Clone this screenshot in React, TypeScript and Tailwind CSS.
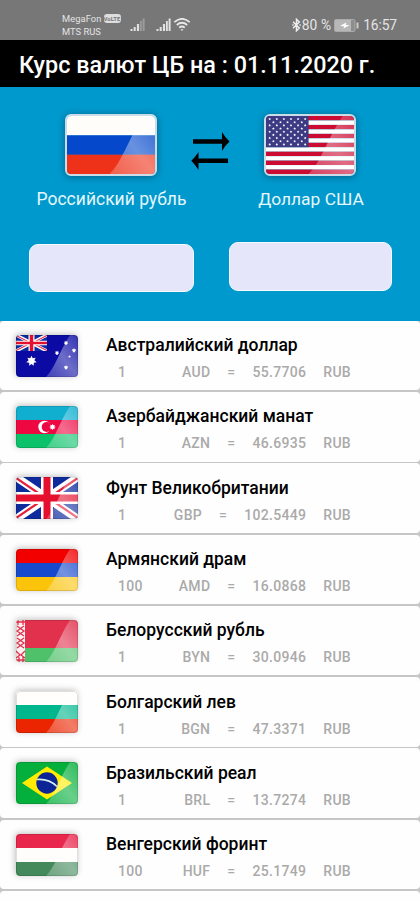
import React from "react";

type FlagCode = "RU" | "US" | "AU" | "AZ" | "GB" | "AM" | "BY" | "BG" | "BR" | "HU";

const starPoints = (cx: number, cy: number, r: number, tips: number) =>
  Array.from({ length: tips * 2 }, (_, i) => {
    const radius = i % 2 ? r * 0.55 : r;
    const a = (Math.PI * i) / tips - Math.PI / 2;
    return `${cx + radius * Math.cos(a)},${cy + radius * Math.sin(a)}`;
  }).join(" ");

function Bands({ colors }: { colors: string[] }) {
  return (
    <>
      {colors.map((c, i) => (
        <rect key={i} x="0" y={(42 / colors.length) * i} width="62" height={42 / colors.length + 0.1} fill={c} />
      ))}
    </>
  );
}

function UnionJack() {
  return (
    <>
      <rect width="62" height="42" fill="#0d2b9c" />
      <path d="M0 0 62 42M62 0 0 42" stroke="#fff" strokeWidth="8" />
      <path d="M0 1 31 22M62 1 31 22M0 41 31 20M62 41 31 20" stroke="#e5203b" strokeWidth="2.2" />
      <path d="M31 0V42M0 21H62" stroke="#fff" strokeWidth="12" />
      <path d="M31 0V42M0 21H62" stroke="#e5102d" strokeWidth="7" />
    </>
  );
}

function FlagArt({ code }: { code: FlagCode }) {
  switch (code) {
    case "RU":
      return <Bands colors={["#fffdfa", "#0548cb", "#ee3119"]} />;
    case "AM":
      return <Bands colors={["#f20000", "#1749cc", "#fbc40b"]} />;
    case "BG":
      return <Bands colors={["#fffefc", "#00b68d", "#ea2500"]} />;
    case "HU":
      return <Bands colors={["#e9264c", "#fffdfc", "#43895b"]} />;
    case "GB":
      return <UnionJack />;
    case "AZ":
      return (
        <>
          <Bands colors={["#10afcf", "#ee0842", "#0bc169"]} />
          <circle cx="28.500" cy="21" r="6.2" fill="#fff" />
          <circle cx="30.700" cy="21" r="5" fill="#ee0842" />
          <polygon points={starPoints(36.5, 21, 3.3, 8)} fill="#fff" />
        </>
      );
    case "AU":
      return (
        <>
          <rect width="62" height="42" fill="#0b0ba4" />
          <svg width="31" height="16" viewBox="0 0 62 42" preserveAspectRatio="none">
            <UnionJack />
          </svg>
          <polygon points={starPoints(15.5, 26, 5.3, 7)} fill="#fff" />
          <polygon points={starPoints(50, 8, 2.4, 7)} fill="#fff" />
          <polygon points={starPoints(41, 18, 2.4, 7)} fill="#fff" />
          <polygon points={starPoints(58, 15.5, 2.4, 7)} fill="#fff" />
          <polygon points={starPoints(53.5, 21.5, 1.4, 5)} fill="#fff" />
          <polygon points={starPoints(50, 32.5, 2.4, 7)} fill="#fff" />
        </>
      );
    case "BY":
      return (
        <>
          <rect width="62" height="28" fill="#e1314c" />
          <rect y="28" width="62" height="14" fill="#4fc16a" />
          <rect width="9" height="42" fill="#fff0f1" />
          <path
            d="M2 0V5M7 0V5M0 2H9M1 6 8 11 1 16M8 6 1 11 8 16M1 18 8 23 1 28M8 18 1 23 8 28M0 31 4 35 0 38M9 31 5 35 9 38M3 37V42M7 37V42M0 40H9"
            stroke="#e1314c"
            strokeWidth="1.3"
            fill="none"
          />
        </>
      );
    case "BR":
      return (
        <>
          <rect width="62" height="42" fill="#05af3c" />
          <path d="M31 4.5 56 21 31 37.5 6 21Z" fill="#ffec00" />
          <circle cx="31" cy="21" r="10.7" fill="#0b2496" />
          <path d="M21 17.5Q33 16.5 41 24.5" stroke="#d9eef0" strokeWidth="1.6" fill="none" />
        </>
      );
    case "US":
      return (
        <>
          {Array.from({ length: 13 }, (_, i) => (
            <rect key={i} y={(42 / 13) * i} width="62" height={42 / 13} fill={i % 2 ? "#fff" : "#cc0b32"} />
          ))}
          <rect width="30" height="22.6" fill="#3c3b83" />
          {Array.from({ length: 9 }, (_, r) =>
            Array.from({ length: r % 2 ? 5 : 6 }, (_, c) => (
              <polygon
                key={`${r}-${c}`}
                points={starPoints((r % 2 ? 5.2 : 2.6) + c * 5, 2.2 + r * 2.3, 0.95, 5)}
                fill="#fff"
              />
            )),
          )}
        </>
      );
  }
}

function Flag({ code, large = false }: { code: FlagCode; large?: boolean }) {
  const id = `gloss-${code}`;
  return (
    <div
      className={
        large
          ? "h-[62px] w-[92px] overflow-hidden rounded-[6px] border-2 border-[#c9dce8] shadow-[0_1px_7px_rgba(0,30,50,0.45)]"
          : "h-[42px] w-[62px] shrink-0 overflow-hidden rounded-[4px] shadow-[-1px_-1px_6px_rgba(0,0,0,0.25)]"
      }
    >
      <svg viewBox="0 0 62 42" preserveAspectRatio="none" className="block size-full">
        <defs>
          <linearGradient id={id} x1="0" y1="1" x2="1" y2="0">
            <stop offset="0" stopColor="#fff" stopOpacity="0.22" />
            <stop offset="0.5" stopColor="#fff" stopOpacity="0.4" />
            <stop offset="1" stopColor="#fff" stopOpacity="0.16" />
          </linearGradient>
        </defs>
        <FlagArt code={code} />
        <path d="M30 42C39 33 43 17 54 0H62V42Z" fill={`url(#${id})`} />
        {!large && <rect x="0.5" y="0.5" width="61" height="41" rx="3.5" fill="none" stroke="#000" strokeOpacity="0.12" />}
      </svg>
    </div>
  );
}

function Signal({ dim = false }: { dim?: boolean }) {
  return (
    <svg width="16" height="14" viewBox="0 0 16 14" fill="#e2e2e2">
      <rect x="0.5" y="11" width="2" height="2" />
      <rect x="3.7" y="9" width="2" height="4" />
      <rect x="6.9" y="6" width="2.2" height="7" />
      <rect x="10" y="3" width="1.8" height="10" opacity={dim ? 0.35 : 1} />
      <rect x="12.6" y="0.5" width="2" height="12.5" opacity={dim ? 0.35 : 1} />
    </svg>
  );
}

function StatusBar() {
  return (
    <div className="flex h-10 bg-[#777777] pl-[62px] pr-[23px] text-[#e4e4e4]">
      <div className="w-[68px] pt-[12px] text-[9.3px] leading-[13px]">
        <div className="flex items-center gap-[2px]">
          <span className="tracking-[0.1px]">MegaFon</span>
          <span className="flex h-[9px] w-[17px] items-center justify-center rounded-[3px] bg-[#dedede] text-[6px] font-bold leading-none text-[#777777]">
            VoLTE
          </span>
        </div>
        <div className="tracking-[0.05px]">MTS RUS</div>
      </div>
      <div className="flex pt-[18px]">
        <Signal dim />
        <div className="w-[10px]" />
        <Signal />
        <svg width="18" height="14" viewBox="0 0 18 14" className="ml-px" fill="none" stroke="#e8e8e8" strokeWidth="1.7">
          <path d="M1.3 4.2Q9-2.6 16.7 4.2M3.8 7Q9 2.5 14.2 7M6.2 9.7Q9 7.3 11.8 9.7" />
          <path d="M7.5 11.3H10.5L9 13Z" fill="#e8e8e8" stroke="none" />
        </svg>
      </div>
      <div className="ml-auto flex items-center pt-[10px]">
        <svg width="9" height="14" viewBox="0 0 9 14" fill="none" stroke="#ededed" strokeWidth="1.5">
          <path d="M1 3.8 7.3 10 4.5 12.7V1.3L7.3 4 1 10.2M.3 7H1.7M7.4 7H8.8" />
        </svg>
        <span className="ml-[1px] whitespace-pre text-[13.8px] tracking-[0.1px]">80 %</span>
        <svg width="25" height="13" viewBox="0 0 25 13" className="ml-[3px]">
          <rect x="0.5" y="0.5" width="20.5" height="12" rx="1.5" fill="#8d8d8d" stroke="#aaaaaa" />
          <rect x="1" y="1" width="16" height="11" fill="#b7b7b7" />
          <path d="M6 7 12.3 3.6 11.8 6H15.5L9.6 9.6 10 7.3Z" fill="#fff" />
          <rect x="22.5" y="3.5" width="2" height="6" fill="#c9c9c9" />
        </svg>
        <span className="ml-[4px] text-[13.8px] tracking-[-0.1px]">16:57</span>
      </div>
    </div>
  );
}

const rates: { code: FlagCode; name: string; nominal: string; iso: string; value: string }[] = [
  { code: "AU", name: "Австралийский доллар", nominal: "1", iso: "AUD", value: "55.7706" },
  { code: "AZ", name: "Азербайджанский манат", nominal: "1", iso: "AZN", value: "46.6935" },
  { code: "GB", name: "Фунт Великобритании", nominal: "1", iso: "GBP", value: "102.5449" },
  { code: "AM", name: "Армянский драм", nominal: "100", iso: "AMD", value: "16.0868" },
  { code: "BY", name: "Белорусский рубль", nominal: "1", iso: "BYN", value: "30.0946" },
  { code: "BG", name: "Болгарский лев", nominal: "1", iso: "BGN", value: "47.3371" },
  { code: "BR", name: "Бразильский реал", nominal: "1", iso: "BRL", value: "13.7274" },
  { code: "HU", name: "Венгерский форинт", nominal: "100", iso: "HUF", value: "25.1749" },
];

export default function App() {
  return (
    <div className="h-[900px] w-[420px] overflow-hidden bg-[#c6c6c6] font-[Roboto,'Noto_Sans',sans-serif]">
      <StatusBar />
      <header className="flex h-[47px] items-center bg-black pl-[19px] pt-[2px]">
        <h1 className="whitespace-nowrap text-[23.4px] font-medium leading-[30px] text-white">
          Курс валют ЦБ на : 01.11.2020 г.
        </h1>
      </header>
      <section className="h-[233.7px] bg-[#0099cd]">
        <div className="flex pt-[27px]">
          <div className="flex w-[178px] flex-col items-center pl-[44px]">
            <Flag code="RU" large />
            <div className="mt-[11px] whitespace-nowrap pl-px text-[17.5px] leading-6 text-[#e6f7fc]">Российский рубль</div>
          </div>
          <svg width="40" height="40" viewBox="0 0 40 40" className="ml-[12px] mt-[17px]" fill="#000">
            <path d="M3 8.200H32V1Q35.500 7 39.500 10.500Q35.500 14 32 20V12.800H3Z" />
            <path d="M38 27.500H8.500V21Q5 26.500 1.300 29.800Q5 33.500 8.500 39V32.100H38Z" />
          </svg>
          <div className="flex w-[160px] flex-col items-center">
            <Flag code="US" large />
            <div className="mt-[11px] whitespace-nowrap pl-[2px] text-[17.4px] leading-6 text-[#e6f7fc]">Доллар США</div>
          </div>
        </div>
        <div className="mt-[31px] flex pl-[29px]">
          <div className="mt-[2px] h-[48px] w-[165px] rounded-[9px] border-[1.5px] border-[#f5f9ff] bg-[#e5e6f9]" />
          <div className="ml-[35px] h-[49px] w-[163px] rounded-[9px] border-[1.5px] border-[#f5f9ff] bg-[#e5e6f9]" />
        </div>
      </section>
      <main>
        {rates.map((r) => (
          <article key={r.iso} className="flex h-[71.3px] pb-[1.7px]">
            <div className="flex flex-1 rounded-[4px] bg-[#fefefe] pl-[16.3px] pt-[14px]">
              <Flag code={r.code} />
              <div className="ml-[27.7px] w-[245px] pt-[0.5px]">
                <h2 className="whitespace-nowrap text-[17.5px] font-medium leading-[20px] text-black">{r.name}</h2>
                <div className="mt-[8px] flex whitespace-nowrap pl-[12px] text-[14px] font-medium leading-[18px] tracking-[0.3px] text-[#aaaaaa]">
                  <span>{r.nominal}</span>
                  <span className="ml-auto">{r.iso}</span>
                  <span className="ml-[17px]">=</span>
                  <span className="ml-[17px]">{r.value}</span>
                  <span className="ml-[17px]">RUB</span>
                </div>
              </div>
            </div>
          </article>
        ))}
        <div className="h-5 rounded-[4px] bg-[#fefefe]" />
      </main>
    </div>
  );
}
